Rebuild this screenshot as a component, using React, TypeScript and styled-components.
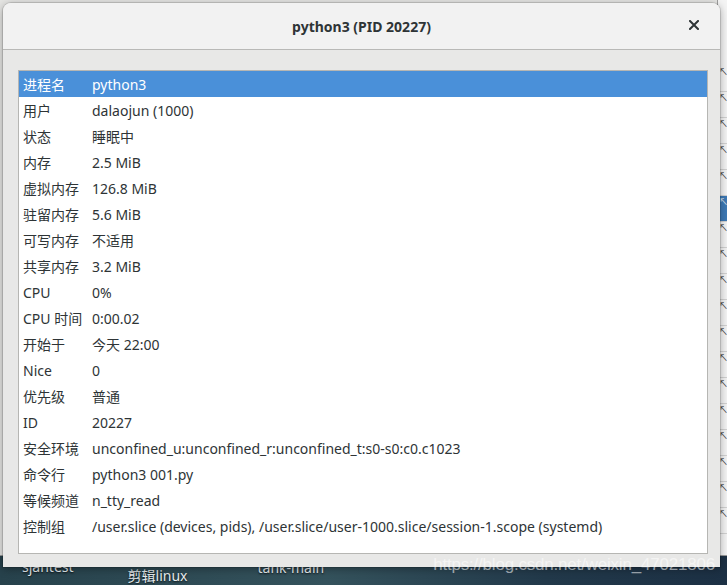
import styled, { createGlobalStyle } from 'styled-components';

const GlobalStyle = createGlobalStyle`
  html, body {
    margin: 0;
    padding: 0;
  }
  body {
    font-family: "Noto Sans", "Noto Sans CJK SC", sans-serif;
  }
`;

const StyledDesktop = styled.div`
  position: relative;
  width: 727px;
  height: 585px;
  overflow: hidden;
  background: linear-gradient(90deg, #27424c 0%, #34525c 45%, #22394a 75%, #1c3044 100%);
`;

const StyledBackWindow = styled.div`
  height: 555px;
  background: #e4e4e2;
  border-bottom: 1px solid #9a9a9a;
  display: flex;
  justify-content: flex-end;
`;

const StyledBackList = styled.div`
  width: 9px;
  padding-top: 66px;
  display: flex;
  flex-direction: column;
  border-left: 1px solid #9d9d9d;
  background: #f4f4f4;
`;

const StyledBackRow = styled.div<{ $active?: boolean }>`
  height: 25px;
  border-bottom: 1px solid #d2d2d2;
  background: ${(p) => (p.$active ? '#3d79b5' : 'transparent')};
  color: ${(p) => (p.$active ? '#dfe9f4' : '#333')};
  font-size: 9px;
  line-height: 12px;
  padding-left: 1px;
`;

const StyledDesktopLabels = styled.div`
  position: absolute;
  left: 0;
  right: 0;
  bottom: 0;
  height: 22px;
  display: flex;
  align-items: flex-end;
  font-size: 14px;
  line-height: 17px;
  color: #e6ecef;
  text-shadow: 0 1px 2px rgba(0, 0, 0, 0.8);
`;

const StyledDesktopLabel = styled.span<{ $left: number; $drop: number }>`
  margin-left: ${(p) => p.$left}px;
  margin-bottom: ${(p) => p.$drop}px;
  white-space: nowrap;
`;

const StyledDialog = styled.div`
  position: absolute;
  left: 3px;
  top: 3px;
  width: 717px;
  height: 564px;
  display: flex;
  flex-direction: column;
  background: #e8e8e7;
  border-radius: 8px 8px 0 0;
  box-shadow: 0 2px 8px rgba(0, 0, 0, 0.35), 0 0 0 1px rgba(0, 0, 0, 0.12);
  overflow: hidden;
`;

const StyledTitleBar = styled.div`
  height: 46px;
  flex-shrink: 0;
  display: flex;
  align-items: center;
  justify-content: center;
  position: relative;
  background: #f2f2f2;
  border-bottom: 1px solid #b9b9b7;
`;

const StyledTitle = styled.h1`
  margin: 0;
  font-size: 14px;
  font-weight: 700;
  color: #2e3436;
`;

const StyledClose = styled.span`
  position: absolute;
  right: 19px;
  top: 15px;
  width: 14px;
  height: 14px;
  display: flex;
  align-items: center;
  justify-content: center;
`;

const StyledBody = styled.div`
  flex-grow: 1;
  padding: 20px 12px 13px 15px;
  display: flex;
`;

const StyledList = styled.div`
  flex-grow: 1;
  background: #ffffff;
  border: 1px solid #b6b6b3;
  display: flex;
  flex-direction: column;
`;

const StyledRow = styled.div<{ $selected?: boolean }>`
  height: 26px;
  display: grid;
  grid-template-columns: 69px 1fr;
  align-items: center;
  padding-left: 4px;
  font-size: 14px;
  background: ${(p) => (p.$selected ? '#4a90d9' : 'transparent')};
  color: ${(p) => (p.$selected ? '#ffffff' : '#2e3436')};
  white-space: nowrap;
`;

const StyledWatermark = styled.div`
  position: absolute;
  right: 12px;
  bottom: 10px;
  font-family: "Liberation Sans", Arial, sans-serif;
  font-size: 17px;
  color: rgba(255, 255, 255, 0.55);
  letter-spacing: -0.2px;
`;

const rows: [string, string][] = [
  ['进程名', 'python3'],
  ['用户', 'dalaojun (1000)'],
  ['状态', '睡眠中'],
  ['内存', '2.5 MiB'],
  ['虚拟内存', '126.8 MiB'],
  ['驻留内存', '5.6 MiB'],
  ['可写内存', '不适用'],
  ['共享内存', '3.2 MiB'],
  ['CPU', '0%'],
  ['CPU 时间', '0:00.02'],
  ['开始于', '今天 22:00'],
  ['Nice', '0'],
  ['优先级', '普通'],
  ['ID', '20227'],
  ['安全环境', 'unconfined_u:unconfined_r:unconfined_t:s0-s0:c0.c1023'],
  ['命令行', 'python3 001.py'],
  ['等候频道', 'n_tty_read'],
  ['控制组', '/user.slice (devices, pids), /user.slice/user-1000.slice/session-1.scope (systemd)'],
];

// 뒤쪽 창 목록: 5번째 줄이 선택된 상태
const backRows = Array.from({ length: 18 }, (_, i) => i);

export default function App() {
  return (
    <StyledDesktop>
      <GlobalStyle />
      <StyledBackWindow>
        <StyledBackList>
          {backRows.map((i) => (
            <StyledBackRow key={i} $active={i === 5}>
              ↖
            </StyledBackRow>
          ))}
        </StyledBackList>
      </StyledBackWindow>
      <StyledDesktopLabels>
        <StyledDesktopLabel $left={22} $drop={10}>sjantest</StyledDesktopLabel>
        <StyledDesktopLabel $left={54} $drop={1}>剪辑linux</StyledDesktopLabel>
        <StyledDesktopLabel $left={70} $drop={9}>tank-main</StyledDesktopLabel>
      </StyledDesktopLabels>
      <StyledDialog>
        <StyledTitleBar>
          <StyledTitle>python3 (PID 20227)</StyledTitle>
          <StyledClose>
            <svg width="10" height="10" viewBox="0 0 10 10">
              <path d="M1 1 L9 9 M9 1 L1 9" stroke="#2e3436" strokeWidth="2" strokeLinecap="square" />
            </svg>
          </StyledClose>
        </StyledTitleBar>
        <StyledBody>
          <StyledList>
            {rows.map(([label, value], index) => (
              <StyledRow key={label} $selected={index === 0}>
                <span>{label}</span>
                <span>{value}</span>
              </StyledRow>
            ))}
          </StyledList>
        </StyledBody>
      </StyledDialog>
      <StyledWatermark>https://blog.csdn.net/weixin_47021806</StyledWatermark>
    </StyledDesktop>
  );
}
